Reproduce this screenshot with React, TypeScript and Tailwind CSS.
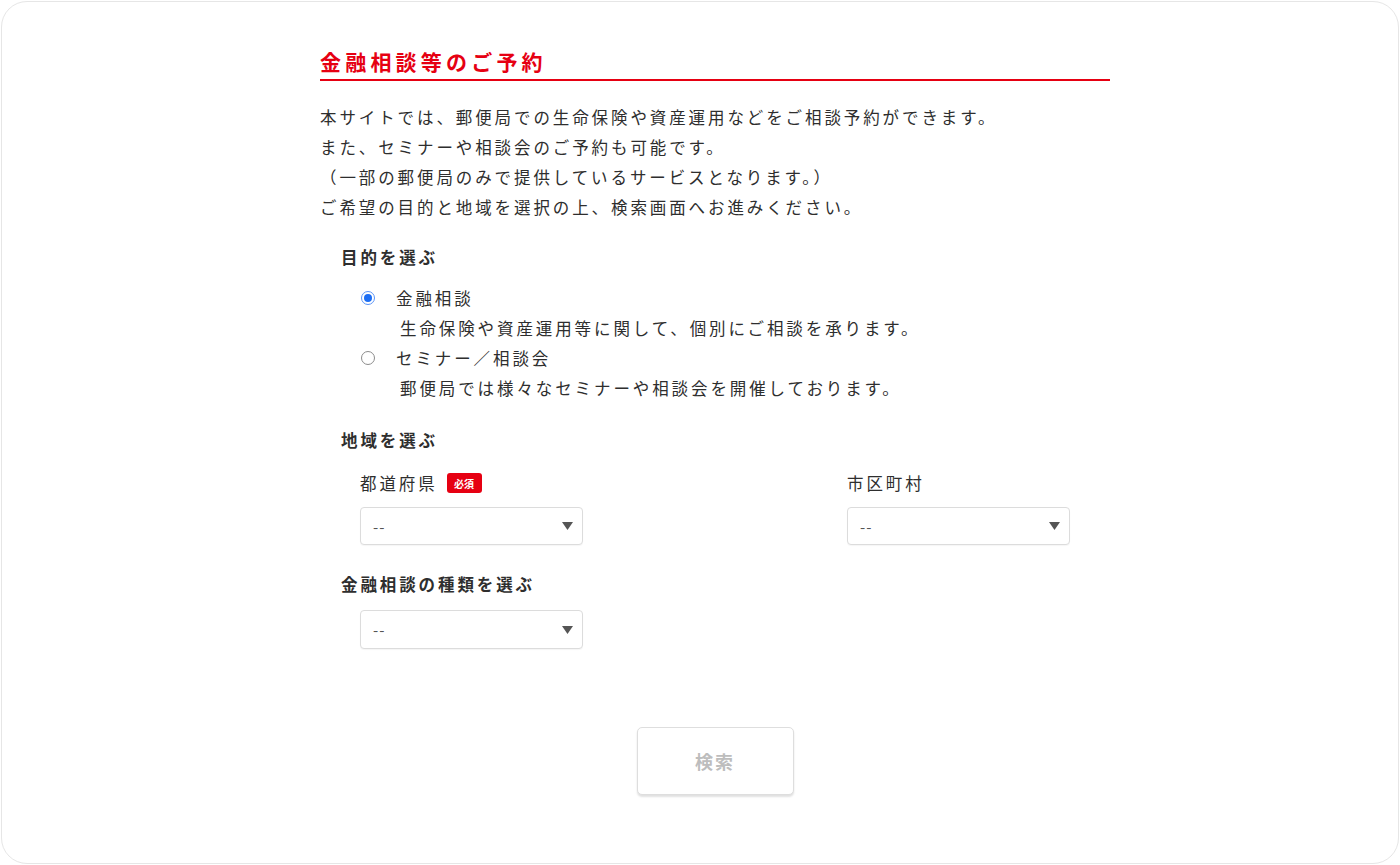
import { useState } from "react";

const FONT = {
  fontFamily: '"Noto Sans CJK JP", "Noto Sans", sans-serif',
};

type Purpose = "consult" | "seminar";

const PURPOSES: { id: Purpose; label: string; desc: string }[] = [
  {
    id: "consult",
    label: "金融相談",
    desc: "生命保険や資産運用等に関して、個別にご相談を承ります。",
  },
  {
    id: "seminar",
    label: "セミナー／相談会",
    desc: "郵便局では様々なセミナーや相談会を開催しております。",
  },
];

function Caret() {
  return (
    <svg width="11" height="8" viewBox="0 0 11 8" className="shrink-0">
      <polygon points="0,0 11,0 5.5,8" fill="#555" />
    </svg>
  );
}

function SelectBox({ h = "h-[38px]" }: { h?: string }) {
  return (
    <div
      className={`w-[223px] ${h} flex items-center justify-between rounded-[4px] border border-[#dcdcdc] bg-white pl-[12px] pr-[9px] shadow-[0_1px_1px_rgba(0,0,0,0.04)]`}
    >
      <span className="text-[15px] leading-none text-[#555] tracking-[1px]">--</span>
      <Caret />
    </div>
  );
}

function Radio({ checked }: { checked: boolean }) {
  return checked ? (
    <span className="w-[14px] h-[14px] rounded-full border-[1.5px] border-[#5b95f7] bg-white flex items-center justify-center shrink-0">
      <span className="w-[8px] h-[8px] rounded-full bg-[#1d6ef3]" />
    </span>
  ) : (
    <span className="w-[14px] h-[14px] rounded-full border border-[#8c8c8c] bg-white shrink-0" />
  );
}

export default function App() {
  const [purpose, setPurpose] = useState<Purpose>("consult");

  return (
    <div className="w-[1400px] h-[865px] bg-white p-[1px]" style={FONT}>
      <div className="h-full rounded-[26px] border border-[#e6e6e6] bg-white">
        <div className="ml-[318px] w-[790px] pt-[44px] text-[#2e2e2e] tracking-[2.9px]">
          <h1 className="text-[21px] leading-[30px] tracking-[4.2px] font-bold text-[#e60012] pb-[3px] border-b-2 border-[#e60012]">
            金融相談等のご予約
          </h1>

          <p className="mt-[21px] text-[16.5px] leading-[30px]">
            本サイトでは、郵便局での生命保険や資産運用などをご相談予約ができます。
            <br />
            また、セミナーや相談会のご予約も可能です。
            <br />
            （一部の郵便局のみで提供しているサービスとなります。）
            <br />
            ご希望の目的と地域を選択の上、検索画面へお進みください。
          </p>

          <h2 className="mt-[23px] pl-[21px] text-[16.5px] leading-[24px] font-bold">
            目的を選ぶ
          </h2>
          <div className="mt-[14px] pl-[41px]">
            {PURPOSES.map((p) => (
              <div
                key={p.id}
                className="cursor-pointer"
                onClick={() => setPurpose(p.id)}
              >
                <div className="flex items-center h-[30px]">
                  <Radio checked={purpose === p.id} />
                  <span className="ml-[21px] text-[16.5px] leading-[30px]">
                    {p.label}
                  </span>
                </div>
                <div className="pl-[39px] text-[16.5px] leading-[30px]">
                  {p.desc}
                </div>
              </div>
            ))}
          </div>

          <h2 className="mt-[25px] pl-[21px] text-[16.5px] leading-[24px] font-bold">
            地域を選ぶ
          </h2>
          <div className="mt-[19px] pl-[40px] flex">
            <div className="w-[487px]">
              <div className="flex items-center h-[24px]">
                <span className="text-[16.5px] leading-[24px]">都道府県</span>
                <span className="ml-[9px] h-[20px] w-[35px] rounded-[3px] bg-[#e60012] text-white text-[10px] font-bold tracking-normal flex items-center justify-center">
                  必須
                </span>
              </div>
              <div className="mt-[12px]">
                <SelectBox />
              </div>
            </div>
            <div>
              <div className="text-[16.5px] leading-[24px]">市区町村</div>
              <div className="mt-[12px]">
                <SelectBox />
              </div>
            </div>
          </div>

          <h2 className="mt-[27px] pl-[21px] text-[16.5px] leading-[24px] font-bold">
            金融相談の種類を選ぶ
          </h2>
          <div className="mt-[14px] pl-[40px]">
            <SelectBox h="h-[39px]" />
          </div>

          <div className="mt-[78px] flex justify-center">
            <button
              disabled
              className="w-[157px] h-[68px] rounded-[5px] border border-[#dedede] bg-white text-[18px] font-bold tracking-[2px] text-[#bdbdbd] shadow-[0_2px_2px_rgba(0,0,0,0.12)]"
            >
              検索
            </button>
          </div>
        </div>
      </div>
    </div>
  );
}
